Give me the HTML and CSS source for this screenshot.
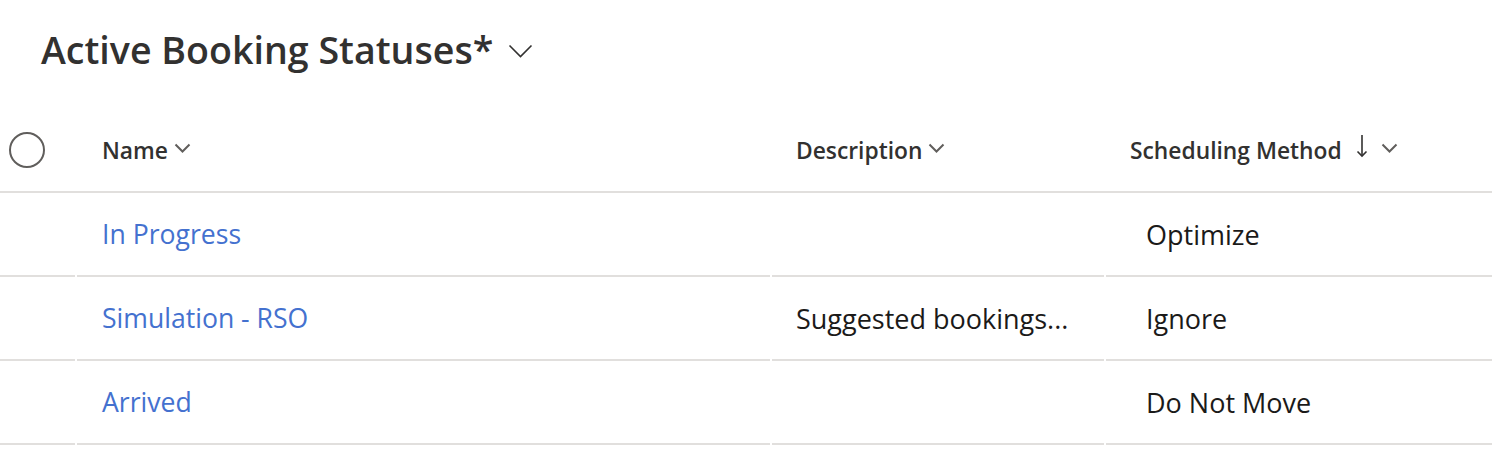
FILE: index.html
```html
<!DOCTYPE html>
<html lang="en">
<head>
<meta charset="utf-8">
<title>Active Booking Statuses</title>
<link rel="stylesheet" href="styles.css">
</head>
<body>
<div class="page">
  <header class="view-header">
    <h1 class="view-title">Active Booking Statuses*</h1>
    <svg class="title-chevron" width="25" height="15" viewBox="0 0 25 15"><polyline points="1.5,1.5 12.5,12.5 23.5,1.5" fill="none" stroke="#323130" stroke-width="1.6"/></svg>
  </header>
  <div class="grid">
    <div class="row head">
      <div class="cell check">
        <svg width="38" height="38" viewBox="0 0 38 38"><circle cx="19" cy="19" r="17" fill="none" stroke="#605e5c" stroke-width="2"/></svg>
      </div>
      <div class="cell col-name"><span class="h-label">Name</span><svg class="h-chev" width="17" height="10" viewBox="0 0 17 10"><polyline points="1.5,1.5 8.5,8.5 15.5,1.5" fill="none" stroke="#605e5c" stroke-width="2"/></svg></div>
      <div class="cell col-desc"><span class="h-label">Description</span><svg class="h-chev" width="17" height="10" viewBox="0 0 17 10"><polyline points="1.5,1.5 8.5,8.5 15.5,1.5" fill="none" stroke="#605e5c" stroke-width="2"/></svg></div>
      <div class="cell col-method"><span class="h-label">Scheduling Method</span><svg class="sort-arrow" width="12" height="24" viewBox="0 0 12 24"><line x1="6" y1="1" x2="6" y2="22" stroke="#323130" stroke-width="1.6"/><polyline points="1.5,17.5 6,22 10.5,17.5" fill="none" stroke="#323130" stroke-width="1.6"/></svg><svg class="h-chev" width="17" height="10" viewBox="0 0 17 10"><polyline points="1.5,1.5 8.5,8.5 15.5,1.5" fill="none" stroke="#605e5c" stroke-width="2"/></svg></div>
    </div>
    <div class="row">
      <div class="cell check"></div>
      <div class="cell col-name"><a class="link" href="#">In Progress</a></div>
      <div class="cell col-desc"></div>
      <div class="cell col-method value">Optimize</div>
    </div>
    <div class="row">
      <div class="cell check"></div>
      <div class="cell col-name"><a class="link" href="#">Simulation - RSO</a></div>
      <div class="cell col-desc text">Suggested bookings...</div>
      <div class="cell col-method value">Ignore</div>
    </div>
    <div class="row">
      <div class="cell check"></div>
      <div class="cell col-name"><a class="link" href="#">Arrived</a></div>
      <div class="cell col-desc"></div>
      <div class="cell col-method value">Do Not Move</div>
    </div>
  </div>
</div>
</body>
</html>
```

FILE: styles.css
```css
html, body {
  margin: 0;
  padding: 0;
  background: #ffffff;
}

body {
  font-family: "Open Sans", "Noto Sans", "Liberation Sans", sans-serif;
  color: #323130;
}

.page {
  width: 1492px;
}

.view-header {
  height: 100px;
  display: flex;
  align-items: center;
  padding-left: 41px;
  gap: 15px;
  box-sizing: border-box;
  padding-bottom: 2px;
}

.view-title {
  margin: 0;
  font-size: 37.6px;
  font-weight: 600;
  color: #323130;
}

.title-chevron {
  margin-top: 4px;
}

.grid {
  display: flex;
  flex-direction: column;
}

.row {
  display: grid;
  grid-template-columns: 75px 693px 332px 1fr;
  column-gap: 2px;
  height: 84px;
}

.row .cell {
  border-bottom: 2px solid #e1dfdd;
  display: flex;
  align-items: center;
  box-sizing: border-box;
  min-width: 0;
  white-space: nowrap;
}

.row.head {
  height: 93px;
  border-bottom: 2px solid #e1dfdd;
  box-sizing: border-box;
}

.row.head .cell {
  border-bottom: none;
  padding-top: 9px;
}

.cell.check {
  padding-left: 8px;
}

.row.head .cell.check {
  padding-top: 9px;
}

.col-name {
  padding-left: 25px;
}

.col-desc {
  padding-left: 24px;
}

.col-method {
  padding-left: 24px;
}

.h-label {
  font-size: 22.8px;
  font-weight: 600;
  color: #323130;
}

.h-chev {
  margin-left: 6px;
  margin-top: -4px;
}

.sort-arrow {
  margin-left: 14px;
  margin-right: 7px;
  margin-top: -8px;
}

.link {
  font-size: 26.6px;
  color: #4471cf;
  text-decoration: none;
}

.text,
.value {
  font-size: 27px;
  color: #1b1a19;
}

.value {
  padding-left: 40px;
}
```
